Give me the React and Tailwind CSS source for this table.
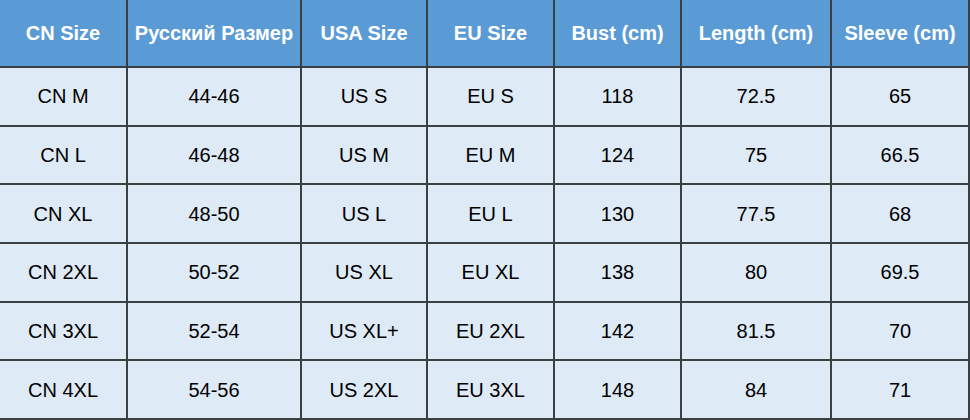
const headers = ['CN Size', 'Русский Размер', 'USA Size', 'EU Size', 'Bust (cm)', 'Length (cm)', 'Sleeve (cm)'];

const rows = [
  ['CN M', '44-46', 'US S', 'EU S', '118', '72.5', '65'],
  ['CN L', '46-48', 'US M', 'EU M', '124', '75', '66.5'],
  ['CN XL', '48-50', 'US L', 'EU L', '130', '77.5', '68'],
  ['CN 2XL', '50-52', 'US XL', 'EU XL', '138', '80', '69.5'],
  ['CN 3XL', '52-54', 'US XL+', 'EU 2XL', '142', '81.5', '70'],
  ['CN 4XL', '54-56', 'US 2XL', 'EU 3XL', '148', '84', '71'],
];

export default function App() {
  return (
    <div
      className="w-[970px] h-[420px] bg-[#3c3f42] pr-[2px] pb-[2px] grid grid-cols-[126px_172px_124px_125px_125px_148px_136px] grid-rows-[66px_repeat(6,1fr)] gap-[2px]"
      style={{ fontFamily: '"Liberation Sans", Arial, sans-serif' }}
    >
      {headers.map((h) => (
        <div key={h} className="bg-[#5b9bd5] flex items-center justify-center text-white font-bold text-[20px]">
          {h}
        </div>
      ))}
      {rows.map((row, i) =>
        row.map((cell, j) => (
          <div key={`${i}-${j}`} className="bg-[#deeaf6] flex items-center justify-center text-black text-[20px]">
            {cell}
          </div>
        ))
      )}
    </div>
  );
}
